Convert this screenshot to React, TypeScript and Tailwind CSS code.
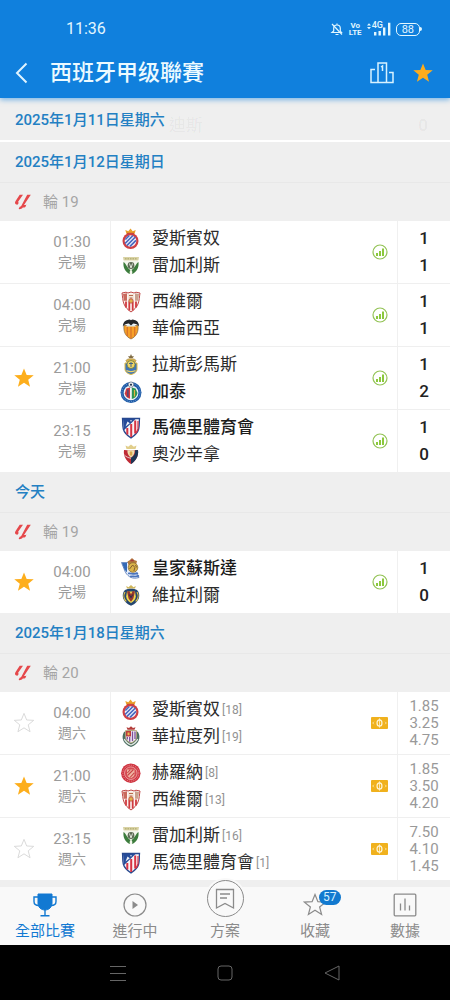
import { useState } from "react";
import type { ReactNode } from "react";

type Team = {
  name: string;
  crest: string;
  rank?: number;
  bold?: boolean;
};

type Match = {
  id: number;
  time: string;
  status: string;
  star: "on" | "off" | "none";
  home: Team;
  away: Team;
  score?: [number, number];
  odds?: string[];
};

type Section = {
  date: string;
  round: string;
  matches: Match[];
};

const sections: Section[] = [
  {
    date: "2025年1月12日星期日",
    round: "輪 19",
    matches: [
      {
        id: 1,
        time: "01:30",
        status: "完場",
        star: "none",
        home: { name: "愛斯賓奴", crest: "espanyol" },
        away: { name: "雷加利斯", crest: "leganes" },
        score: [1, 1],
      },
      {
        id: 2,
        time: "04:00",
        status: "完場",
        star: "none",
        home: { name: "西維爾", crest: "sevilla" },
        away: { name: "華倫西亞", crest: "valencia" },
        score: [1, 1],
      },
      {
        id: 3,
        time: "21:00",
        status: "完場",
        star: "on",
        home: { name: "拉斯彭馬斯", crest: "laspalmas" },
        away: { name: "加泰", crest: "getafe", bold: true },
        score: [1, 2],
      },
      {
        id: 4,
        time: "23:15",
        status: "完場",
        star: "none",
        home: { name: "馬德里體育會", crest: "atletico", bold: true },
        away: { name: "奧沙辛拿", crest: "osasuna" },
        score: [1, 0],
      },
    ],
  },
  {
    date: "今天",
    round: "輪 19",
    matches: [
      {
        id: 5,
        time: "04:00",
        status: "完場",
        star: "on",
        home: { name: "皇家蘇斯達", crest: "sociedad", bold: true },
        away: { name: "維拉利爾", crest: "villarreal" },
        score: [1, 0],
      },
    ],
  },
  {
    date: "2025年1月18日星期六",
    round: "輪 20",
    matches: [
      {
        id: 6,
        time: "04:00",
        status: "週六",
        star: "off",
        home: { name: "愛斯賓奴", crest: "espanyol", rank: 18 },
        away: { name: "華拉度列", crest: "valladolid", rank: 19 },
        odds: ["1.85", "3.25", "4.75"],
      },
      {
        id: 7,
        time: "21:00",
        status: "週六",
        star: "on",
        home: { name: "赫羅納", crest: "girona", rank: 8 },
        away: { name: "西維爾", crest: "sevilla", rank: 13 },
        odds: ["1.85", "3.50", "4.20"],
      },
      {
        id: 8,
        time: "23:15",
        status: "週六",
        star: "off",
        home: { name: "雷加利斯", crest: "leganes", rank: 16 },
        away: { name: "馬德里體育會", crest: "atletico", rank: 1 },
        odds: ["7.50", "4.10", "1.45"],
      },
    ],
  },
];

const crests: Record<string, ReactNode> = {
  espanyol: (
    <>
      <path d="M7.5 7 6.300 3l3 1.200L11.500 1.600l2.200 2.600 3-1.200L15.500 7z" fill="#e8a02c" />
      <path d="M8 5.800h7v1.400H8z" fill="#c4502e" />
      <circle cx="11.500" cy="14" r="8" fill="#cf3f45" />
      <circle cx="11.500" cy="14" r="5.800" fill="#f2f4fb" />
      <path
        d="m6.300 12.500 4-4M6 16.500l8-8M7.800 18.600l8.600-8.600M11 19.400l6-6"
        stroke="#4a68c0"
        strokeWidth="1.700"
      />
    </>
  ),
  leganes: (
    <>
      <path d="M4 3h16l-.6 3.600H4.600z" fill="#d9d2a4" />
      <path d="M6 4.800h12" stroke="#a9a568" strokeWidth="1" strokeDasharray="1.500 1" />
      <path d="M4.500 7h15c.6 6-1.500 11-7.500 13.500C6 18 3.900 13 4.500 7z" fill="#f4f6ec" />
      <path d="M4.500 8c3 2 3.500 6 7 8-1 1.500-1 2.500-.5 4C6 18 4 13.500 4.500 8z" fill="#3c7c3d" />
      <path d="M19.500 8c-3 2-3.500 6-7 8 1 1.500 1 2.500.5 4 5-2 7-6.500 6.500-12z" fill="#3c7c3d" />
      <circle cx="12" cy="11.500" r="3.400" fill="#5d6b55" />
      <path d="M10.500 9.500 12 14l1.500-4.500" stroke="#dfe4d8" fill="none" />
    </>
  ),
  sevilla: (
    <>
      <path
        d="M3 3 7 2.200 9 3l3-1 3 1 2-.8 4 .8c-.7 4-.5 7-2 11-1.300 3.500-4 5.800-7 8-3-2.200-5.700-4.500-7-8C3.500 10 3.700 7 3 3z"
        fill="#fbf3f0"
        stroke="#c14a48"
      />
      <path d="M7 11.500v6M10.300 11.500v9M13.700 11.500v9M17 11.500v6" stroke="#d03a3f" strokeWidth="1.800" />
      <path d="M4 4 8 3.300v7.500H4.800z" fill="#c96a5d" />
      <path d="M20 4 16 3.300v7.500h3.200z" fill="#c9a28e" />
      <path d="M9 4h6v6.500H9z" fill="#f4e6d8" />
      <path d="M10 5.500h4M10.500 8h3" stroke="#b86d50" />
      <circle cx="12" cy="11" r="2.200" fill="#e0b24e" stroke="#b63438" strokeWidth=".7" />
    </>
  ),
  valencia: (
    <>
      <path d="M5 8.500h14c.8 6-1.500 11-7 13.500C6.500 19.500 4.200 14.500 5 8.500z" fill="#f7a128" stroke="#6d5230" strokeWidth=".6" />
      <path d="M8.300 10v9M12 10v11.500M15.700 10v9" stroke="#d9742b" strokeWidth="1.300" />
      <path d="M7 9.500c1-3.500 9-3.500 10 0z" fill="#dceaf2" />
      <path
        d="M12 3.300c.8-1.300 2.600-1 3.500-.3 2.500.3 4.700 3 4.600 6.600-1.600-2.600-3.600-3.200-6-3.200L12 8.500 9.900 6.400c-2.400 0-4.400.6-6 3.200C3.800 6 6 3.300 8.500 3c.9-.7 2.700-1 3.500.3z"
        fill="#24272b"
      />
    </>
  ),
  laspalmas: (
    <>
      <path d="m12 1 1 2.300h2L13.700 5H10.300L9 3.300h2z" fill="#806c45" />
      <path d="M7 7.500c1-2.500 9-2.500 10 0l-1.500 2.800h-7z" fill="#d7b24a" stroke="#a18038" strokeWidth=".6" />
      <path d="M6 10h12v6c0 3-3 4.800-6 5.500-3-.7-6-2.500-6-5.500z" fill="#3f76b8" stroke="#e1bb44" />
      <circle cx="12" cy="11.500" r="4" fill="#f0d564" stroke="#5c7048" strokeWidth=".7" />
      <path d="M12 9v5M10 10.500h4" stroke="#42668c" />
      <path d="M7.500 17.500c3 1.500 6 1.500 9 0" stroke="#f0d564" fill="none" strokeWidth="1.200" />
    </>
  ),
  getafe: (
    <>
      <circle cx="12" cy="12.500" r="10.500" fill="#1d5ba7" />
      <circle cx="12" cy="12.500" r="9.100" fill="none" stroke="#8fb3dc" strokeWidth=".8" strokeDasharray="1 1.200" />
      <circle cx="12" cy="12.800" r="7.400" fill="#eef2f5" />
      <path d="M7.300 8.500 11 7.500v11.300c-3-.6-5-3-5.200-5.500z" fill="#d0393c" />
      <path d="M12.800 7.500 16.500 8.500l2 4.500c-.3 3-2.700 5.400-5.700 6z" fill="#2a9453" />
      <path d="M8.900 9.500v7.500" stroke="#2a4d8a" strokeWidth="1.100" />
      <path d="M15.500 10v6.500" stroke="#e5b33e" strokeWidth="1.200" />
      <circle cx="12" cy="4.600" r="2.700" fill="#f4f7f9" stroke="#47566c" strokeWidth=".6" />
      <path d="m12 3.400 1.200.9-.5 1.400h-1.400l-.5-1.400z" fill="#27364b" />
    </>
  ),
  atletico: (
    <>
      <path
        d="M3.500 2.500h17c-.4 4 .1 7-.8 10.500C18.500 17.500 15 20 12 22c-3-2-6.500-4.500-7.700-9-.9-3.500-.4-6.500-.8-10.500z"
        fill="#f8f3f5"
        stroke="#27488f"
        strokeWidth="1.300"
      />
      <path d="M8.300 12v6.500M12.200 8v13M16.200 4.500v13" stroke="#d63344" strokeWidth="2" />
      <path d="M19 5v8c-.5 1.800-1.400 3.200-2.400 4.300" stroke="#d63344" fill="none" strokeWidth="1.200" />
      <path d="M4 3h12.500L5.200 14C4.200 10.500 4.500 7 4 3z" fill="#254b99" />
      <path d="m6.500 10.500 2-5 2.300 1.700z" fill="#eef2f8" />
      <circle cx="12" cy="4.800" r=".7" fill="#fff" />
    </>
  ),
  osasuna: (
    <>
      <path d="m7.500 6-1-3.600 2.700 1.300L12 1.600l2.800 2.100 2.700-1.300-1 3.600z" fill="#e1ce8b" />
      <path d="M5 7c4 .6 10 .6 14 0 1 6-2.500 11.500-7 14C7.500 18.500 4 13 5 7z" fill="#bf2b36" />
      <path d="M12 14.500c3-1 4.500-4 4-7.200l3-.3c1 6-2.500 11.500-7 14z" fill="#1d3656" />
      <path d="M8.500 7.300h7c.5 3-1.300 6-3.500 7.200-2.200-1.200-4-4.200-3.500-7.200z" fill="#eedfb0" />
      <path d="M10.700 9 12 8.200l1.300.8v2.600L12 13.300l-1.300-1.700z" fill="#d9a74a" />
      <path d="M5.500 12c1.200 1.500 3.800 3 6.500 3.200" stroke="#edf0ee" fill="none" strokeWidth=".8" />
    </>
  ),
  sociedad: (
    <>
      <path d="M2.500 5.500h9L20 20.500C13.500 22.500 9.500 20 6.500 15.500z" fill="#e8effa" stroke="#4e73b4" strokeWidth=".8" />
      <path d="M3 6h5v9.500L5.500 12.500z" fill="#356ab6" />
      <path d="M9 16.500c3-.8 6 1.800 10-.5M11 19.500c3-.8 6 1 9-1" stroke="#4b75bd" fill="none" strokeWidth="1.600" />
      <path d="M8.500 4.500 11 3l2-2 2 2 3 1-1 4H9.500z" fill="#b4793c" />
      <path d="M11.500 2.700h3.200v1.600h-3.200z" fill="#a53e3b" />
      <circle cx="14" cy="10.500" r="4.800" fill="#dbb44a" stroke="#8f7134" strokeWidth=".8" />
      <path d="m10.500 12 3.200-4 2.200 2.500-1 3.500M16.500 8l1.200 2.500" stroke="#825e2f" fill="none" />
    </>
  ),
  villarreal: (
    <>
      <path d="M8 4.500 7.200 2l2.300 1.200L12 1l2.500 2.200L16.800 2 16 4.500z" fill="#ceb55a" />
      <path d="M6 6c3-1.600 9-1.600 12 0 3 3 3 8 0 11.500-2 2.300-4 3.500-6 4.300-2-.8-4-2-6-4.300C3 14 3 9 6 6z" fill="#24456f" />
      <path d="M6 8c-1.800 3-1.300 7 1.300 9.500M18 8c1.800 3 1.300 7-1.300 9.500" stroke="#e0c34b" fill="none" strokeWidth="1.200" />
      <path d="M8 7.500h8l.8 5c0 3-2.300 5-4.800 6.500-2.500-1.500-4.800-3.500-4.800-6.500z" fill="#f2d94e" />
      <path d="M8 7.500 10.300 7 12 10.300 13.700 7l2.300.5-1.600 7L12 17.800l-2.400-3.300z" fill="#96372f" />
      <path d="m10.300 10.500 1.700 3.200 1.700-3.200" stroke="#23324d" fill="none" />
    </>
  ),
  valladolid: (
    <>
      <path d="m8.500 4.800-1-2.600 2.500.9 2-1.900 2 1.900 2.500-.9-1 2.600z" fill="#b43d3a" />
      <path d="M5 7c4-2.300 10-2.300 14 0 3 5 1.500 12-7 15C3.500 19 2 12 5 7z" fill="#4c6e62" />
      <path d="M5.300 14c1 2.500 3.500 4.800 6.700 6 3.200-1.200 5.700-3.500 6.700-6" stroke="#e4eae4" fill="none" strokeWidth="1.300" />
      <path d="M6.500 5.500h11V12c0 3-2.500 4.800-5.500 6-3-1.200-5.500-3-5.500-6z" fill="#f0eaf3" stroke="#ad9b60" strokeWidth=".7" />
      <path d="M7 6h5v5.500H7z" fill="#be3b3e" />
      <path d="M8.500 7.500h2v2.700h-2z" fill="#e6c04e" />
      <path d="M13.500 6.500V16M16 6.500V14M10.700 12v4.700M8.300 12v2.500" stroke="#7c509a" strokeWidth="1.300" />
    </>
  ),
  girona: (
    <>
      <circle cx="11.800" cy="12.200" r="9.700" fill="#cf3440" />
      <circle cx="11.800" cy="12.200" r="8" fill="none" stroke="#e88d90" strokeWidth="1" strokeDasharray="1.200 1" />
      <circle cx="11.800" cy="12.200" r="6.300" fill="#d64b52" stroke="#f7d7d3" strokeWidth=".6" />
      <path d="M8 8.500h7.500v4.700c0 2-2 3.300-3.700 4-1.700-.7-3.800-2-3.800-4z" fill="#efb6a4" />
      <path d="m8.300 12 3-3.300M8.500 14.500l6-6M11 16.500l4.300-4.700" stroke="#c84548" strokeWidth="1.100" />
    </>
  ),
};

function Crest({ name }: { name: string }) {
  return (
    <svg viewBox="0 0 24 24" className="h-6 w-6 shrink-0" fill="none" aria-hidden="true">
      {crests[name]}
    </svg>
  );
}

const starPath = "m12 1.500 2.900 7.200 7.700.4-6 4.900 2 7.500L12 17.300l-6.600 4.200 2-7.500-6-4.900 7.700-.4z";

function Star({ className }: { className: string }) {
  return (
    <svg viewBox="0 0 24 24" className={className} aria-hidden="true">
      <path d={starPath} />
    </svg>
  );
}

function LeagueLogo() {
  return (
    <svg viewBox="0 0 18 16" className="h-4 w-[18px]" fill="#e5484b" aria-hidden="true">
      <path d="M5.700.800H9L4.300 7.400c-.5.800-.2 1.200.6 1L3.800 10.600C1.200 11 .2 9 1.600 7z" />
      <path d="M13.200.800h3.600L10 11c1 .1 1.800-.1 2.400-.6l-1 2.600c-.8.500-1.700.6-2.600.5-.9 1.200-2.300 1.800-4.200 1.600l1.100-2.300c.7 0 1.100-.3 1.500-.8z" />
    </svg>
  );
}

function StatsIcon() {
  return (
    <svg viewBox="0 0 16 16" className="h-4 w-4" fill="none" aria-hidden="true">
      <circle cx="8" cy="8" r="7" stroke="#93c355" strokeWidth="1.200" />
      <path d="M5 12V9M8 12V7M11 12V4.500" stroke="#8bc83c" strokeWidth="2" />
    </svg>
  );
}

function OddsIcon() {
  return (
    <svg viewBox="0 0 18 12" className="h-3 w-[17px]" preserveAspectRatio="none" fill="none" aria-hidden="true">
      <rect width="18" height="12" rx="1" fill="#f0b11d" />
      <ellipse cx="9" cy="6" rx="2.600" ry="3.200" stroke="#fff4d4" strokeWidth="1.300" />
      <path d="M9 1.300v9.400" stroke="#fff4d4" strokeWidth=".8" />
      <path d="M3 4.800 1.800 6 3 7.200M15 4.800 16.200 6 15 7.200" stroke="#fbe2a0" />
    </svg>
  );
}

function TeamLine({ team }: { team: Team }) {
  return (
    <div className="flex items-center gap-[9px]">
      <Crest name={team.crest} />
      <span
        className={
          team.bold
            ? "text-[17px] leading-[27px] font-medium text-[#1c1c1c]"
            : "text-[17px] leading-[27px] text-[#2b2b2b]"
        }
      >
        {team.name}
        {team.rank && <span className="ml-0.5 align-[1px] text-xs text-[#929292]">[{team.rank}]</span>}
      </span>
    </div>
  );
}

function MatchRow({ match }: { match: Match }) {
  const [starred, setStarred] = useState(match.star === "on");

  return (
    <li className="flex items-stretch">
      <div className="flex w-12 shrink-0 items-center justify-center">
        {match.star !== "none" && (
          <button type="button" aria-label="收藏" aria-pressed={starred} onClick={() => setStarred(!starred)}>
            <Star
              className={
                starred ? "h-[22px] w-[22px] fill-[#fdae1c]" : "h-[22px] w-[22px] fill-none stroke-[#d6d6d6]"
              }
            />
          </button>
        )}
      </div>
      <div className="mr-[14px] flex w-12 shrink-0 flex-col justify-center text-center text-[#9b9b9b]">
        <time className="text-[15px] leading-5">{match.time}</time>
        <span className="text-sm leading-5">{match.status}</span>
      </div>
      <div className="flex min-w-0 flex-1 items-center justify-between border-l border-[#f0f0f0] py-1 pr-[9px] pl-2">
        <div>
          <TeamLine team={match.home} />
          <TeamLine team={match.away} />
        </div>
        {match.odds ? <OddsIcon /> : <StatsIcon />}
      </div>
      <div className="flex w-[53px] shrink-0 flex-col items-center justify-center border-l border-[#f0f0f0]">
        {match.score?.map((s, i) => (
          <span key={i} className="text-[17px] leading-[27px] font-medium text-[#222]">
            {s}
          </span>
        ))}
        {match.odds?.map((o, i) => (
          <span key={i} className="text-[15px] leading-[17px] text-[#999]">
            {o}
          </span>
        ))}
      </div>
    </li>
  );
}

function StatusBar() {
  return (
    <div className="flex items-center justify-between pr-7 pl-[66px] text-[#e2f7ff]">
      <span className="text-base leading-6">11:36</span>
      <div className="flex items-center gap-[5px]">
        <svg viewBox="0 0 14 14" className="h-[14px] w-[14px]" fill="none" stroke="currentColor" aria-hidden="true">
          <path d="M2 10.500h9.500L10.300 9V6.300c0-2-1.300-3.300-3.300-3.300S3.700 4.300 3.700 6.300V9L2 10.500zM7 1.500V3M5.500 12.500h3" strokeWidth="1.200" />
          <path d="m2 2 10 10.500" strokeWidth="1.200" />
        </svg>
        <span className="flex flex-col text-center text-[8px] leading-[7px] font-bold">
          <span>Vo</span>
          <span>LTE</span>
        </span>
        <span className="relative h-[14px] w-6">
          <svg viewBox="0 0 24 14" className="h-[14px] w-6" fill="currentColor" aria-hidden="true">
            <path d="m0 3.500 2-2.200 2 2.200zM0 5l2 2.200L4 5z" />
            <path d="M7 10h2.400v3.500H7zM11.500 9h2.400v4.500h-2.400zM16 5.500h2.400v8H16zM21 .8h2.400v12.700H21z" />
          </svg>
          <span className="absolute -top-px left-[5px] text-[9px] leading-[9px] font-medium">4G</span>
        </span>
        <span className="flex items-center">
          <span className="rounded-[5px] border border-current px-[5px] text-[11px] leading-[11px]">88</span>
          <span className="h-1 w-0.5 rounded-r bg-current" />
        </span>
      </div>
    </div>
  );
}

function Header() {
  return (
    <header className="relative z-20 bg-[#1080dd] pt-[17px] pb-[9px] shadow-[0_2px_5px_rgba(16,128,221,0.5)]">
      <StatusBar />
      <div className="mt-4 flex items-center pr-4 pl-[14px]">
        <button type="button" aria-label="返回" className="mr-5 text-[#dff4ff]">
          <svg viewBox="0 0 16 24" className="h-6 w-4" fill="none" stroke="currentColor" strokeWidth="2" aria-hidden="true">
            <path d="M12.500 2.500 3 12l9.500 9.500" />
          </svg>
        </button>
        <h1 className="flex-1 text-[22px] leading-8 font-medium text-[#ecfaff]">西班牙甲级聯賽</h1>
        <button type="button" aria-label="排名" className="mr-[18px] text-[#d8f2ff]">
          <svg viewBox="0 0 24 24" className="h-6 w-6" fill="none" stroke="currentColor" strokeWidth="1.500" aria-hidden="true">
            <path d="M8 21.500V2h8.500v19.500M5 8.500H1v13h22V11.500h-4" />
            <path d="m11 6 1.500-1v5" />
          </svg>
        </button>
        <button type="button" aria-label="收藏聯賽">
          <Star className="h-[22px] w-[22px] fill-[#fdac1b]" />
        </button>
      </div>
    </header>
  );
}

function StickyDate({ date }: { date: string }) {
  return (
    <div className="flex items-end border-b-2 border-white bg-[#efefef] pr-[22px] pl-[15px]">
      <h2 className="pt-[10px] pb-2 text-[15px] leading-6 font-medium text-[#2380c3]">{date}</h2>
      <div
        aria-hidden="true"
        className="ml-1 flex flex-1 justify-between text-[17px] leading-[30px] text-black/5"
      >
        <span>迪斯</span>
        <span className="font-medium">0</span>
      </div>
    </div>
  );
}

const tabs = [
  {
    label: "全部比賽",
    icon: (
      <svg viewBox="0 0 24 24" className="mb-1 h-6 w-6" fill="none" stroke="currentColor" aria-hidden="true">
        <path d="M5 1h14v9c0 4-3 7-7 7s-7-3-7-7z" fill="currentColor" />
        <path d="M5 4H1v4.500C1 11 3 12.500 6 12.500M19 4h4v4.500c0 2.500-2 4-5 4M12 16v6.500M7.500 22.800h9" strokeWidth="1.400" />
      </svg>
    ),
  },
  {
    label: "進行中",
    icon: (
      <svg viewBox="0 0 24 24" className="mb-1 h-6 w-6" fill="none" stroke="currentColor" aria-hidden="true">
        <circle cx="12" cy="12" r="11" strokeWidth="1.200" />
        <path d="M9.500 8v8l5.500-4z" fill="currentColor" stroke="none" />
      </svg>
    ),
  },
  {
    label: "方案",
    // taller than the bar, pokes out above it
    icon: (
      <span className="-mt-4 mb-1 flex h-[37px] w-[37px] items-center justify-center rounded-full border border-[#8b8b8b] bg-[#f9f9f9] ring-2 ring-[#f9f9f9]">
        <svg viewBox="0 0 22 22" className="h-[22px] w-[22px]" fill="none" stroke="currentColor" strokeWidth="1.300" aria-hidden="true">
          <path d="M2.500 1.500h17V20L11 15.500 2.500 20zM6 6h10M6 10h7" />
        </svg>
      </span>
    ),
  },
  {
    label: "收藏",
    badge: 57,
    icon: <Star className="mb-1 h-6 w-6 fill-none stroke-current stroke-[1.2]" />,
  },
  {
    label: "數據",
    icon: (
      <svg viewBox="0 0 24 24" className="mb-1 h-6 w-6" fill="none" stroke="currentColor" strokeWidth="1.300" aria-hidden="true">
        <rect x="1.200" y="1.200" width="21.600" height="21.600" rx="1" />
        <path d="M7.500 17.500v-7M12 17.500v-12M16.500 17.500v-5" />
      </svg>
    ),
  },
];

function TabBar() {
  const [active, setActive] = useState("全部比賽");

  return (
    <nav className="grid grid-cols-5 bg-[#f9f9f9] pt-[6px] pb-1">
      {tabs.map((t) => (
        <button
          key={t.label}
          type="button"
          onClick={() => setActive(t.label)}
          className={
            active === t.label
              ? "flex flex-col items-center justify-end text-[#1279d2]"
              : "flex flex-col items-center justify-end text-[#8b8b8b]"
          }
        >
          <span className="relative">
            {t.icon}
            {t.badge && (
              <span className="absolute -top-[3px] left-4 rounded-full bg-[#1279cf] px-1 text-xs leading-[15px] text-[#d5f1ff]">
                {t.badge}
              </span>
            )}
          </span>
          <span className="text-[15px] leading-5">{t.label}</span>
        </button>
      ))}
    </nav>
  );
}

function SystemNav() {
  return (
    <div className="grid h-[55px] shrink-0 grid-cols-3 bg-black px-16 text-[#666]">
      <button type="button" aria-label="選單" className="flex items-center justify-center">
        <svg viewBox="0 0 16 16" className="h-4 w-4" stroke="currentColor" aria-hidden="true">
          <path d="M0 1.500h16M0 8.500h16M0 15.500h16" />
        </svg>
      </button>
      <button type="button" aria-label="主頁" className="flex items-center justify-center">
        <svg viewBox="0 0 16 16" className="h-4 w-4" fill="none" stroke="currentColor" aria-hidden="true">
          <rect x="1" y="1" width="14" height="14" rx="3" />
        </svg>
      </button>
      <button type="button" aria-label="返回上一頁" className="flex items-center justify-center">
        <svg viewBox="0 0 16 16" className="h-4 w-4" fill="none" stroke="currentColor" strokeLinejoin="round" aria-hidden="true">
          <path d="M15 1v14L1 8z" />
        </svg>
      </button>
    </div>
  );
}

export default function App() {
  return (
    <div className="flex min-h-screen flex-col bg-[#efefef] font-['Roboto','Noto_Sans_CJK_TC',sans-serif]">
      <Header />
      <main>
        <StickyDate date="2025年1月11日星期六" />
        {sections.map((section) => (
          <section key={section.date}>
            <h2 className="px-[15px] py-2 text-[15px] leading-6 font-medium text-[#2380c3]">{section.date}</h2>
            <div className="flex items-center gap-[11px] border-t border-[#e8e8e8] px-[14px] py-[7px]">
              <LeagueLogo />
              <span className="text-[15px] leading-6 text-[#a5a5a5]">{section.round}</span>
            </div>
            <ul className="divide-y divide-[#efefef] bg-white">
              {section.matches.map((m) => (
                <MatchRow key={m.id} match={m} />
              ))}
            </ul>
          </section>
        ))}
      </main>
      <div className="mt-auto">
        <TabBar />
        <SystemNav />
      </div>
    </div>
  );
}
